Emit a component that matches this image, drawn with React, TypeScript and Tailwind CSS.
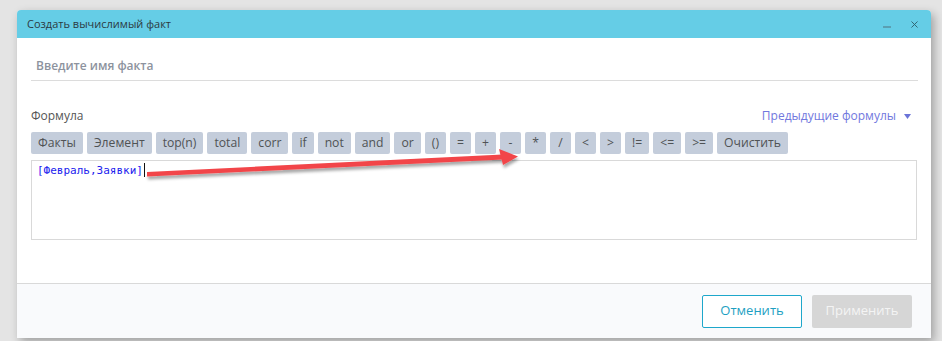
import { X } from 'lucide-react';

const ops = [
    'Факты',
    'Элемент',
    'top(n)',
    'total',
    'corr',
    'if',
    'not',
    'and',
    'or',
    '()',
    '=',
    '+',
    '-',
    '*',
    '/',
    '<',
    '>',
    '!=',
    '<=',
    '>=',
    'Очистить',
];

function RedArrow() {
    return (
        <svg
            className="pointer-events-none absolute left-0 top-0"
            width={942}
            height={341}
            viewBox="0 0 942 341"
        >
            <defs>
                <filter id="arrowShadow" x="-10%" y="-50%" width="120%" height="200%">
                    <feDropShadow dx="1" dy="3" stdDeviation="1.5" floodColor="#000" floodOpacity="0.35" />
                </filter>
            </defs>
            <g filter="url(#arrowShadow)" fill="#f24548" stroke="none">
                <path d="M147 172 L503 154.5 L503 159.5 L147 176.5 Z" />
                <path d="M499 149 L518 156.5 L503 165 Z" />
            </g>
        </svg>
    );
}

export default function App() {
    return (
        <div
            className="relative h-[341px] w-[942px] overflow-hidden bg-[#e4e4e4]"
            style={{ fontFamily: '"Open Sans", "Noto Sans", sans-serif' }}
        >
            <div className="ml-[17px] mt-[10px] flex h-[328px] w-[914px] flex-col overflow-hidden rounded-t-[4px] bg-white shadow-[3px_4px_10px_rgba(0,0,0,0.3)]">
                {/* header */}
                <div className="flex h-[28px] items-center justify-between bg-[#65cde6] pl-[10px] pr-[11px]">
                    <span className="text-[11px] text-[#2c3a3f]">Создать вычислимый факт</span>
                    <div className="flex items-center gap-[18px]">
                        <div className="mt-[5px] h-[2px] w-[8px] bg-[#5a9fb2]" />
                        <X className="h-[11px] w-[11px] text-[#2e5e6a]" strokeWidth={2} />
                    </div>
                </div>

                {/* body */}
                <div className="flex-1 px-[14px] pt-[13px]">
                    <div className="mr-[-1px] flex h-[30px] items-center border-b border-[#dcdcdc] pl-[5px]">
                        <span className="text-[12px] font-semibold text-[#8d939e]">Введите имя факта</span>
                    </div>

                    <div className="mt-[27px] flex h-[16px] items-center justify-between">
                        <span className="text-[12px] text-[#555]">Формула</span>
                        <div className="mr-[6px] flex items-center gap-[8px]">
                            <span className="text-[12px] text-[#7178de]">Предыдущие формулы</span>
                            <svg width="7" height="5" viewBox="0 0 7 5">
                                <path d="M0 0 H7 L3.5 5 Z" fill="#6b74d8" />
                            </svg>
                        </div>
                    </div>

                    <div className="mt-[8px] flex gap-[4px]">
                        {ops.map((op) => (
                            <div
                                key={op}
                                className="flex h-[22px] min-w-[21px] items-center justify-center rounded-[2px] bg-[#c4cddb] px-[7px] text-[12.2px] text-[#505355]"
                            >
                                {op}
                            </div>
                        ))}
                    </div>

                    <div className="mt-[6px] h-[80px] border border-[#d9d9d9] px-[5px] pt-[1px] text-[11px] leading-[16px]">
                        <span
                            className="text-[#2222ee]"
                            style={{ fontFamily: '"DejaVu Sans Mono", "Liberation Mono", monospace' }}
                        >
                            [Февраль,Заявки]
                        </span>
                        <span className="ml-[1px] inline-block h-[14px] w-[1px] align-[-3px] bg-[#111]" />
                    </div>
                </div>

                {/* footer */}
                <div className="flex h-[55px] items-center justify-end gap-[10px] border-t border-[#d9d9d9] bg-[#f9fafc] pr-[19px]">
                    <button className="flex h-[33px] w-[100px] items-center justify-center rounded-[2px] border border-[#1ea7cb] bg-white text-[13px] text-[#1e9fc2]">
                        Отменить
                    </button>
                    <button className="flex h-[33px] w-[100px] items-center justify-center rounded-[2px] bg-[#d6d6d6] text-[13px] text-[#f4f4f4]">
                        Применить
                    </button>
                </div>
            </div>
            <RedArrow />
        </div>
    );
}
